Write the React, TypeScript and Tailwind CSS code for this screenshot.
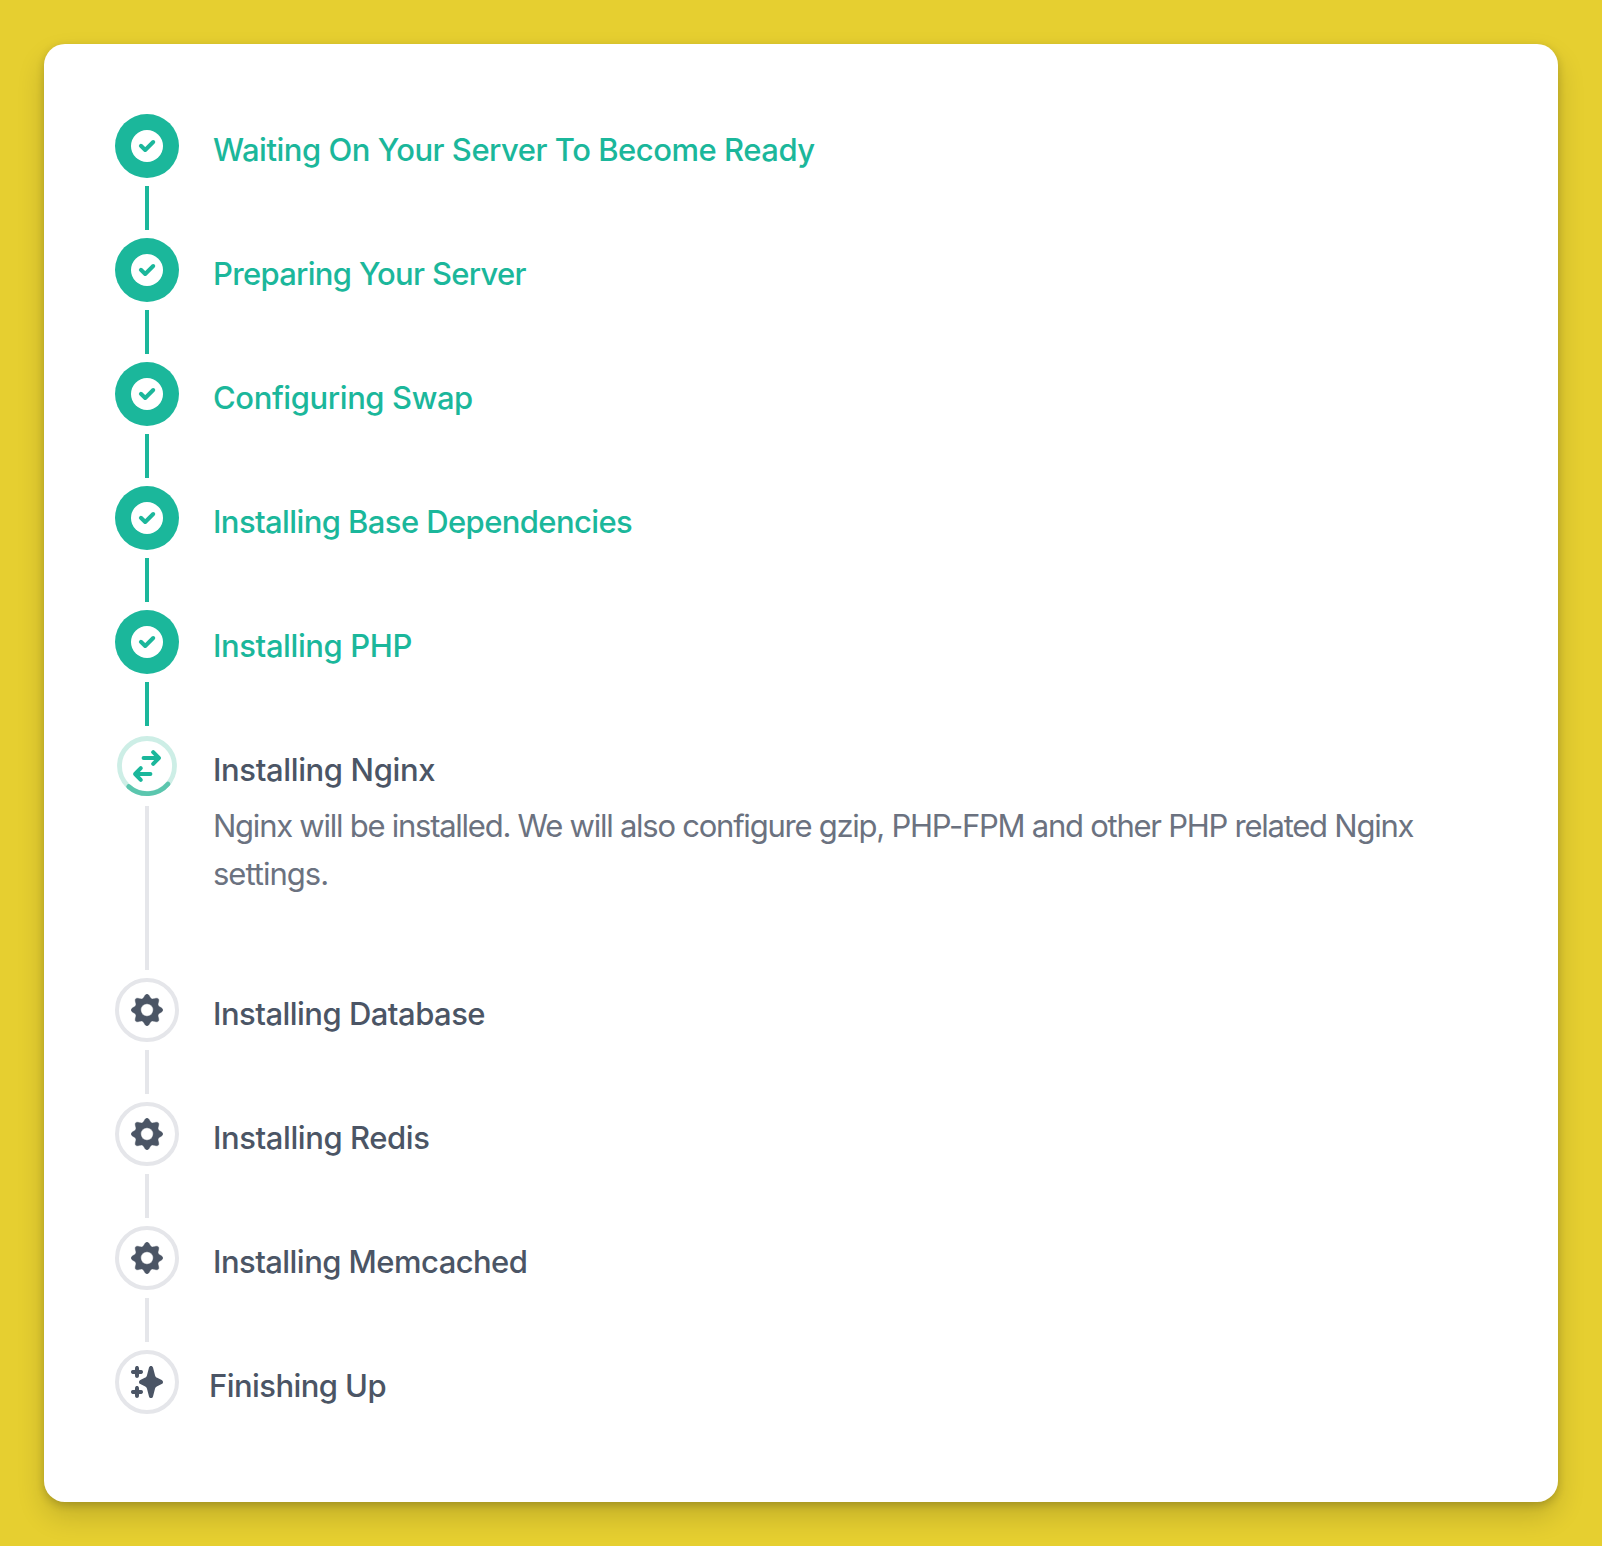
import React from "react";

type Status = "done" | "active" | "pending" | "final";

const steps: { title: string; status: Status; spacing: string; detail?: string[] }[] = [
  { title: "Waiting On Your Server To Become Ready", status: "done", spacing: "tracking-[-0.48px]" },
  { title: "Preparing Your Server", status: "done", spacing: "tracking-[-0.7px]" },
  { title: "Configuring Swap", status: "done", spacing: "tracking-[-0.41px]" },
  { title: "Installing Base Dependencies", status: "done", spacing: "tracking-[-0.6px]" },
  { title: "Installing PHP", status: "done", spacing: "tracking-[-0.4px]" },
  {
    title: "Installing Nginx",
    status: "active",
    spacing: "tracking-[-0.37px]",
    detail: [
      "Nginx will be installed. We will also configure gzip, PHP-FPM and other PHP related Nginx",
      "settings.",
    ],
  },
  { title: "Installing Database", status: "pending", spacing: "tracking-[-0.52px]" },
  { title: "Installing Redis", status: "pending", spacing: "tracking-[-0.42px]" },
  { title: "Installing Memcached", status: "pending", spacing: "tracking-[-0.55px]" },
  { title: "Finishing Up", status: "final", spacing: "tracking-[-0.57px]" },
];

// Eight soft teeth around the gear's body.
const gearOutline =
  Array.from({ length: 144 }, (_, i) => {
    const a = (i / 144) * Math.PI * 2;
    const r = 12.2 + 3.7 * Math.pow((1 + Math.cos(8 * a)) / 2, 1.25);
    return `${i === 0 ? "M" : "L"}${(16 + r * Math.cos(a)).toFixed(2)} ${(16 + r * Math.sin(a)).toFixed(2)}`;
  }).join("") + "Z";

function CheckIcon() {
  return (
    <svg className="size-8" viewBox="0 0 32 32" fill="none">
      <circle cx="16" cy="16" r="16" fill="white" />
      <path d="M9.9 15.8L14.200 20L22.200 12" stroke="#1bb79b" strokeWidth="4" strokeLinecap="round" strokeLinejoin="round" />
    </svg>
  );
}

function GearIcon() {
  return (
    <svg className="size-8" viewBox="0 0 32 32" fill="#4b5565">
      <path fillRule="evenodd" stroke="#4b5565" strokeWidth="0.4" strokeLinejoin="round" d={gearOutline + "M16 9.800a6.200 6.200 0 1 0 0 12.400a6.200 6.200 0 1 0 0-12.400Z"} />
    </svg>
  );
}

function SparklesIcon() {
  return (
    <svg className="size-8" viewBox="0 0 32 32" fill="#4b5565">
      <path d="M20 0C21 0 21.7.6 22 1.6L24 9.2C24.3 10.5 25 11.3 26.200 11.800L30.700 13.900C31.600 14.400 32 15.100 32 16C32 16.900 31.600 17.600 30.700 18.100L26.200 20.200C25 20.700 24.300 21.500 24 22.800L22 30.400C21.700 31.400 21 32 20 32C19 32 18.300 31.400 18 30.400L16 22.800C15.700 21.500 15 20.700 13.800 20.200L9.300 18.100C8.400 17.600 8 16.900 8 16C8 15.100 8.400 14.400 9.300 13.900L13.800 11.800C15 11.300 15.700 10.500 16 9.200L18 1.600C18.300.6 19 0 20 0Z" />
      {[6, 26].map((y) => (
        <path
          key={y}
          transform={`translate(6 ${y})`}
          d="M0-6C1-6 1.800-5.300 1.900-4.300L2.100-2.100L4.300-1.900C5.300-1.800 6-1 6 0S5.300 1.800 4.300 1.900L2.100 2.100L1.900 4.300C1.800 5.300 1 6 0 6S-1.800 5.300-1.900 4.300L-2.100 2.100L-4.300 1.900C-5.300 1.800-6 1-6 0S-5.300-1.800-4.300-1.900L-2.100-2.100L-1.900-4.300C-1.800-5.300-1-6 0-6Z"
        />
      ))}
    </svg>
  );
}

function ProgressIcon() {
  return (
    <svg className="size-16 shrink-0" viewBox="0 0 64 64" fill="none" strokeLinecap="round" strokeLinejoin="round">
      <circle cx="32" cy="32" r="27.500" stroke="#cdeee6" strokeWidth="4.800" />
      <path d="M53 50A27.500 27.500 0 0 1 13.700 52.600" stroke="#5bc6ae" strokeWidth="4.800" />
      <g transform="translate(16 16)" stroke="#1bb79b" strokeWidth="4">
        <path d="M12.600 8H27.800M22.200 2.200L27.900 8L22.200 13.800" />
        <path d="M19.400 24H4.200M9.800 18.200L4.100 24L9.800 29.800" />
      </g>
    </svg>
  );
}

function Marker({ status }: { status: Status }) {
  if (status === "active") return <ProgressIcon />;
  if (status === "done")
    return (
      <div className="flex size-16 shrink-0 items-center justify-center rounded-full bg-[#1bb79b]">
        <CheckIcon />
      </div>
    );
  return (
    <div className="flex size-16 shrink-0 items-center justify-center rounded-full border-4 border-[#e5e6ea]">
      {status === "final" ? <SparklesIcon /> : <GearIcon />}
    </div>
  );
}

export default function App() {
  return (
    <div className="h-[1546px] w-[1602px] bg-[#e6cf30] p-11 font-['Inter',sans-serif]">
      <main className="h-[1458px] w-[1514px] rounded-[21px] bg-white pt-[70px] pl-[71px] shadow-[0_14px_28px_rgba(0,0,0,0.16),0_3px_8px_rgba(0,0,0,0.18)]">
        <ol className="flex flex-col gap-2">
          {steps.map(({ title, status, spacing, detail }) => (
            <li key={title} className={`flex ${status === "final" ? "gap-[30px]" : "gap-[34px]"} ${detail ? "h-[236px]" : status === "final" ? "h-16" : "h-[116px]"}`}>
              <div className="flex w-16 shrink-0 flex-col items-center gap-2">
                <Marker status={status} />
                {status !== "final" && <div className={`w-1 grow ${status === "done" ? "bg-[#1bb79b]" : "bg-[#e5e6ea]"}`} />}
              </div>
              <div className="pt-3">
                <h2 className={`text-[31px] leading-[48px] font-medium whitespace-nowrap ${spacing} ${status === "done" ? "text-[#1bb79b]" : "text-[#4b5565]"}`}>{title}</h2>
                {detail && (
                  <p className="pt-2 text-[31px] leading-[48px] font-normal whitespace-nowrap text-[#6b7280]">
                    <span className="block tracking-[-1.25px]">{detail[0]}</span>
                    <span className="block tracking-[-1px]">{detail[1]}</span>
                  </p>
                )}
              </div>
            </li>
          ))}
        </ol>
      </main>
    </div>
  );
}
